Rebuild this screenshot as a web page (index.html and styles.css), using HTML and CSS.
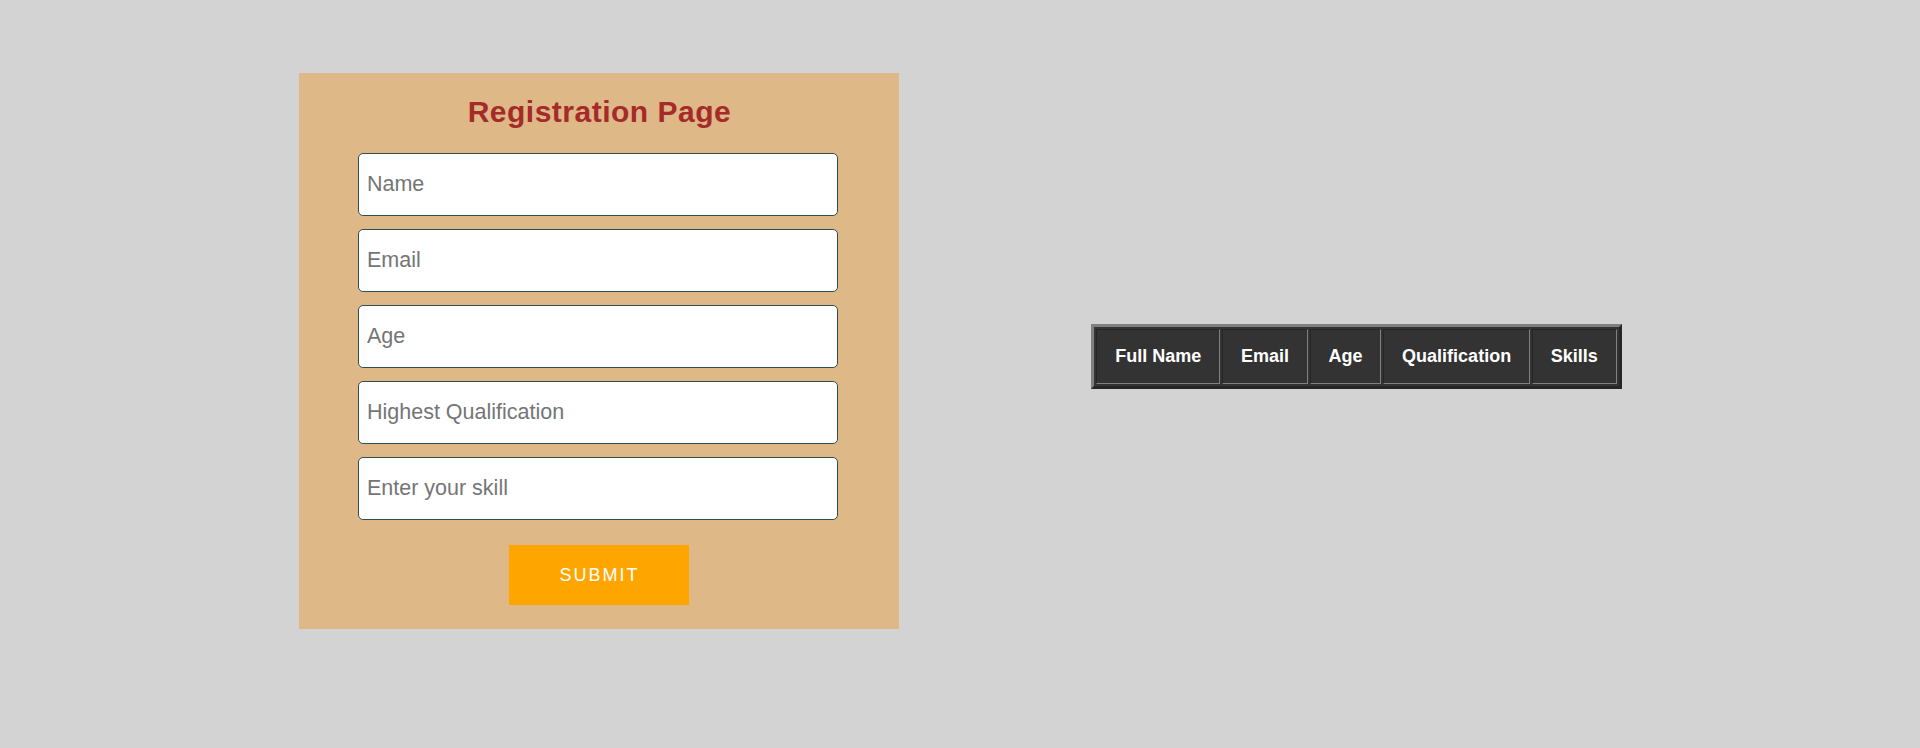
FILE: index.html
```html
<!DOCTYPE html>
<html lang="en">
<head>
<meta charset="utf-8">
<title>Registration Page</title>
<link rel="stylesheet" href="styles.css">
</head>
<body>
<div class="page">
  <form class="reg-form">
    <h2 class="reg-title">Registration Page</h2>
    <input class="field" type="text" placeholder="Name">
    <input class="field" type="text" placeholder="Email">
    <input class="field" type="text" placeholder="Age">
    <input class="field" type="text" placeholder="Highest Qualification">
    <input class="field" type="text" placeholder="Enter your skill">
    <button class="submit-btn" type="button">SUBMIT</button>
  </form>
  <table class="data-table">
    <thead>
      <tr>
        <th>Full Name</th>
        <th>Email</th>
        <th>Age</th>
        <th>Qualification</th>
        <th>Skills</th>
      </tr>
    </thead>
  </table>
</div>
</body>
</html>
```

FILE: styles.css
```css
html, body {
  margin: 0;
  padding: 0;
}

body {
  background: #d3d3d3;
  font-family: "Liberation Sans", Arial, sans-serif;
  width: 1920px;
  height: 748px;
  overflow: hidden;
}

.page {
  display: flex;
  justify-content: center;
  align-items: flex-start;
  gap: 192px;
  padding-top: 73px;
  padding-left: 1px;
}

.reg-form {
  width: 600px;
  box-sizing: border-box;
  background: #deb887;
  padding: 22px 0 24px;
  display: flex;
  flex-direction: column;
  align-items: center;
  gap: 13px;
}

.reg-title {
  margin: 0 0 11px;
  font-size: 30px;
  line-height: normal;
  font-weight: bold;
  letter-spacing: 0.5px;
  color: #a52a2a;
}

.field {
  width: 480px;
  height: 63px;
  box-sizing: border-box;
  border: 1px solid #2f4f4f;
  border-radius: 5px;
  background: #fff;
  padding: 0 8px;
  font-family: "Liberation Sans", Arial, sans-serif;
  font-size: 21.5px;
  color: #333;
  margin-left: -3px;
}

.field::placeholder {
  color: #757575;
}

.submit-btn {
  margin-top: 12px;
  width: 180px;
  height: 60px;
  border: none;
  background: #ffa500;
  color: #fff;
  font-family: "Liberation Sans", Arial, sans-serif;
  font-size: 18px;
  letter-spacing: 2px;
  padding: 0;
}

.data-table {
  margin-top: 251px;
  background: #333;
  border-style: solid;
  border-width: 3px;
  border-color: #808080 #262626 #262626 #808080;
  border-collapse: separate;
  border-spacing: 2px;
}

.data-table th {
  color: #fff;
  font-size: 18px;
  font-weight: bold;
  padding: 16px 17.8px;
  border-style: solid;
  border-width: 1px;
  border-color: #262626 #808080 #808080 #262626;
}
```
